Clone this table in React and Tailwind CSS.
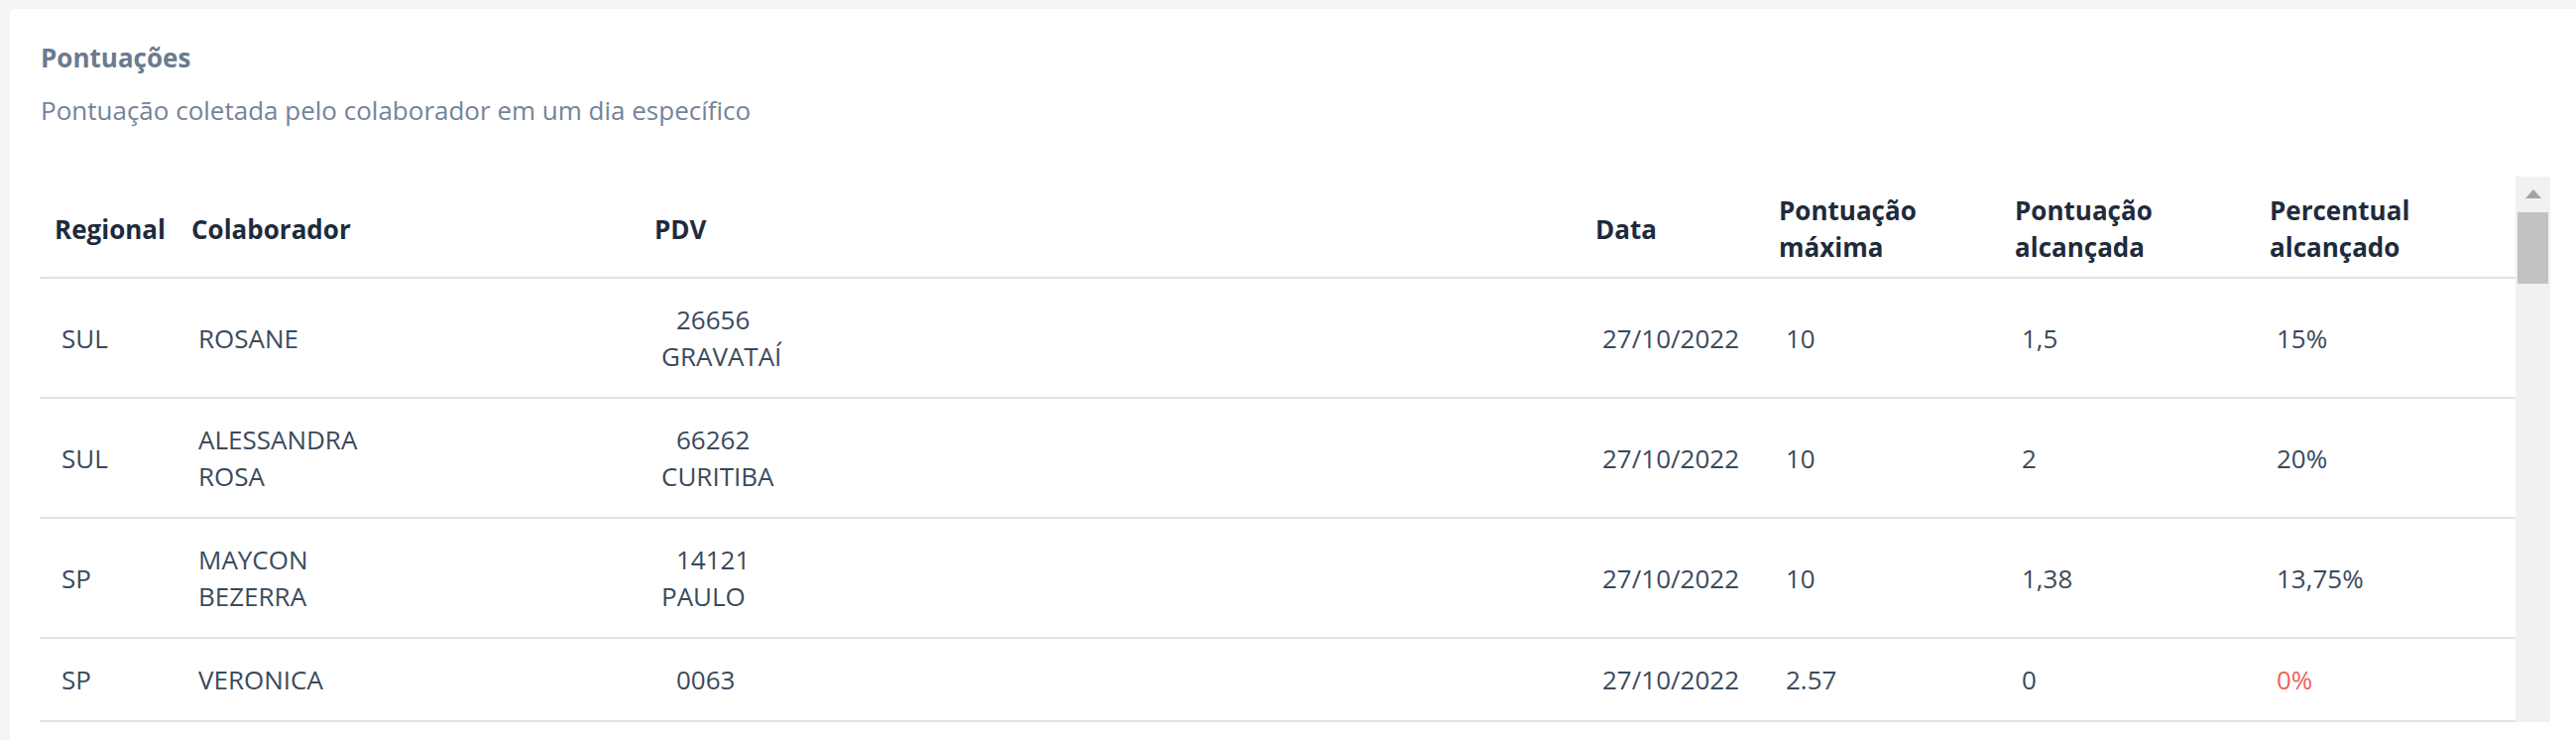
import React from 'react';

const rows = [
  { regional: 'SUL', colaborador: ['ROSANE'], pdv: ['26656', 'GRAVATAÍ'], data: '27/10/2022', max: '10', alcancada: '1,5', percentual: '15%' },
  { regional: 'SUL', colaborador: ['ALESSANDRA', 'ROSA'], pdv: ['66262', 'CURITIBA'], data: '27/10/2022', max: '10', alcancada: '2', percentual: '20%' },
  { regional: 'SP', colaborador: ['MAYCON', 'BEZERRA'], pdv: ['14121', 'PAULO'], data: '27/10/2022', max: '10', alcancada: '1,38', percentual: '13,75%' },
  { regional: 'SP', colaborador: ['VERONICA'], pdv: ['0063'], data: '27/10/2022', max: '2.57', alcancada: '0', percentual: '0%' },
];

const columns = [
  { key: 'regional', label: ['Regional'], width: 'w-[138px]' },
  { key: 'colaborador', label: ['Colaborador'], width: 'w-[467px]' },
  { key: 'pdv', label: ['PDV'], width: 'w-[949px]' },
  { key: 'data', label: ['Data'], width: 'w-[185px]' },
  { key: 'max', label: ['Pontuação', 'máxima'], width: 'w-[238px]' },
  { key: 'alcancada', label: ['Pontuação', 'alcançada'], width: 'w-[257px]' },
  { key: 'percentual', label: ['Percentual', 'alcançado'], width: 'w-[263px]' },
];

const Scrollbar = () => (
  <div className="w-[35px] shrink-0 bg-[#f1f1f1] flex flex-col items-center">
    <div className="h-[36px] w-full flex items-center justify-center">
      <svg width="16" height="10" viewBox="0 0 16 10">
        <polygon points="8,0 16,9 0,9" fill="#a3a3a3" />
      </svg>
    </div>
    <div className="w-[31px] h-[72px] bg-[#c1c1c1]" />
  </div>
);

const Cell = ({ col, row }) => {
  if (col.key === 'colaborador') {
    return row.colaborador.map(line => <div key={line}>{line}</div>);
  }
  if (col.key === 'pdv') {
    return row.pdv.map((line, i) => (
      <div key={line} className={i === 0 ? 'pl-[15px]' : ''}>{line}</div>
    ));
  }
  if (col.key === 'percentual' && row.percentual === '0%') {
    return <span className="text-[#ef5f5f]">{row.percentual}</span>;
  }
  return row[col.key];
};

export default function App() {
  return (
    <div
      className="h-[746px] overflow-hidden bg-[#f5f5f5] pt-[9px] pl-[10px] text-[26px] leading-[37px]"
      style={{ fontFamily: '"Open Sans", "Noto Sans", sans-serif' }}
    >
      <div className="h-[800px] bg-white rounded-tl-[6px] pl-[30px] pr-[26px] pt-[31px]">
        {/* Card header */}
        <h2 className="pl-px font-bold text-[#6b7a90]">Pontuações</h2>
        <p className="pl-px mt-[16px] text-[#74839a]">Pontuação coletada pelo colaborador em um dia específico</p>

        {/* Table with scrollbar */}
        <div className="mt-[48px] flex">
          <div className="flex-1">
            <table className="w-full table-fixed border-collapse">
              <thead>
                <tr className="border-b-2 border-[#e3e3e3]">
                  {columns.map(col => (
                    <th
                      key={col.key}
                      className={`${col.width} pl-[15px] pt-[16px] pb-[11px] text-left align-middle font-bold text-[#1e2b3c]`}
                    >
                      {col.label.map(l => <div key={l}>{l}</div>)}
                    </th>
                  ))}
                </tr>
              </thead>
              <tbody>
                {rows.map((row, i) => (
                  <tr key={i} className="border-b-2 border-[#e3e3e3]">
                    {columns.map(col => (
                      <td key={col.key} className="pl-[22px] pt-[23px] pb-[22px] align-middle text-[#3a4a5c]">
                        <Cell col={col} row={row} />
                      </td>
                    ))}
                  </tr>
                ))}
              </tbody>
            </table>
          </div>
          <Scrollbar />
        </div>
      </div>
    </div>
  );
}
